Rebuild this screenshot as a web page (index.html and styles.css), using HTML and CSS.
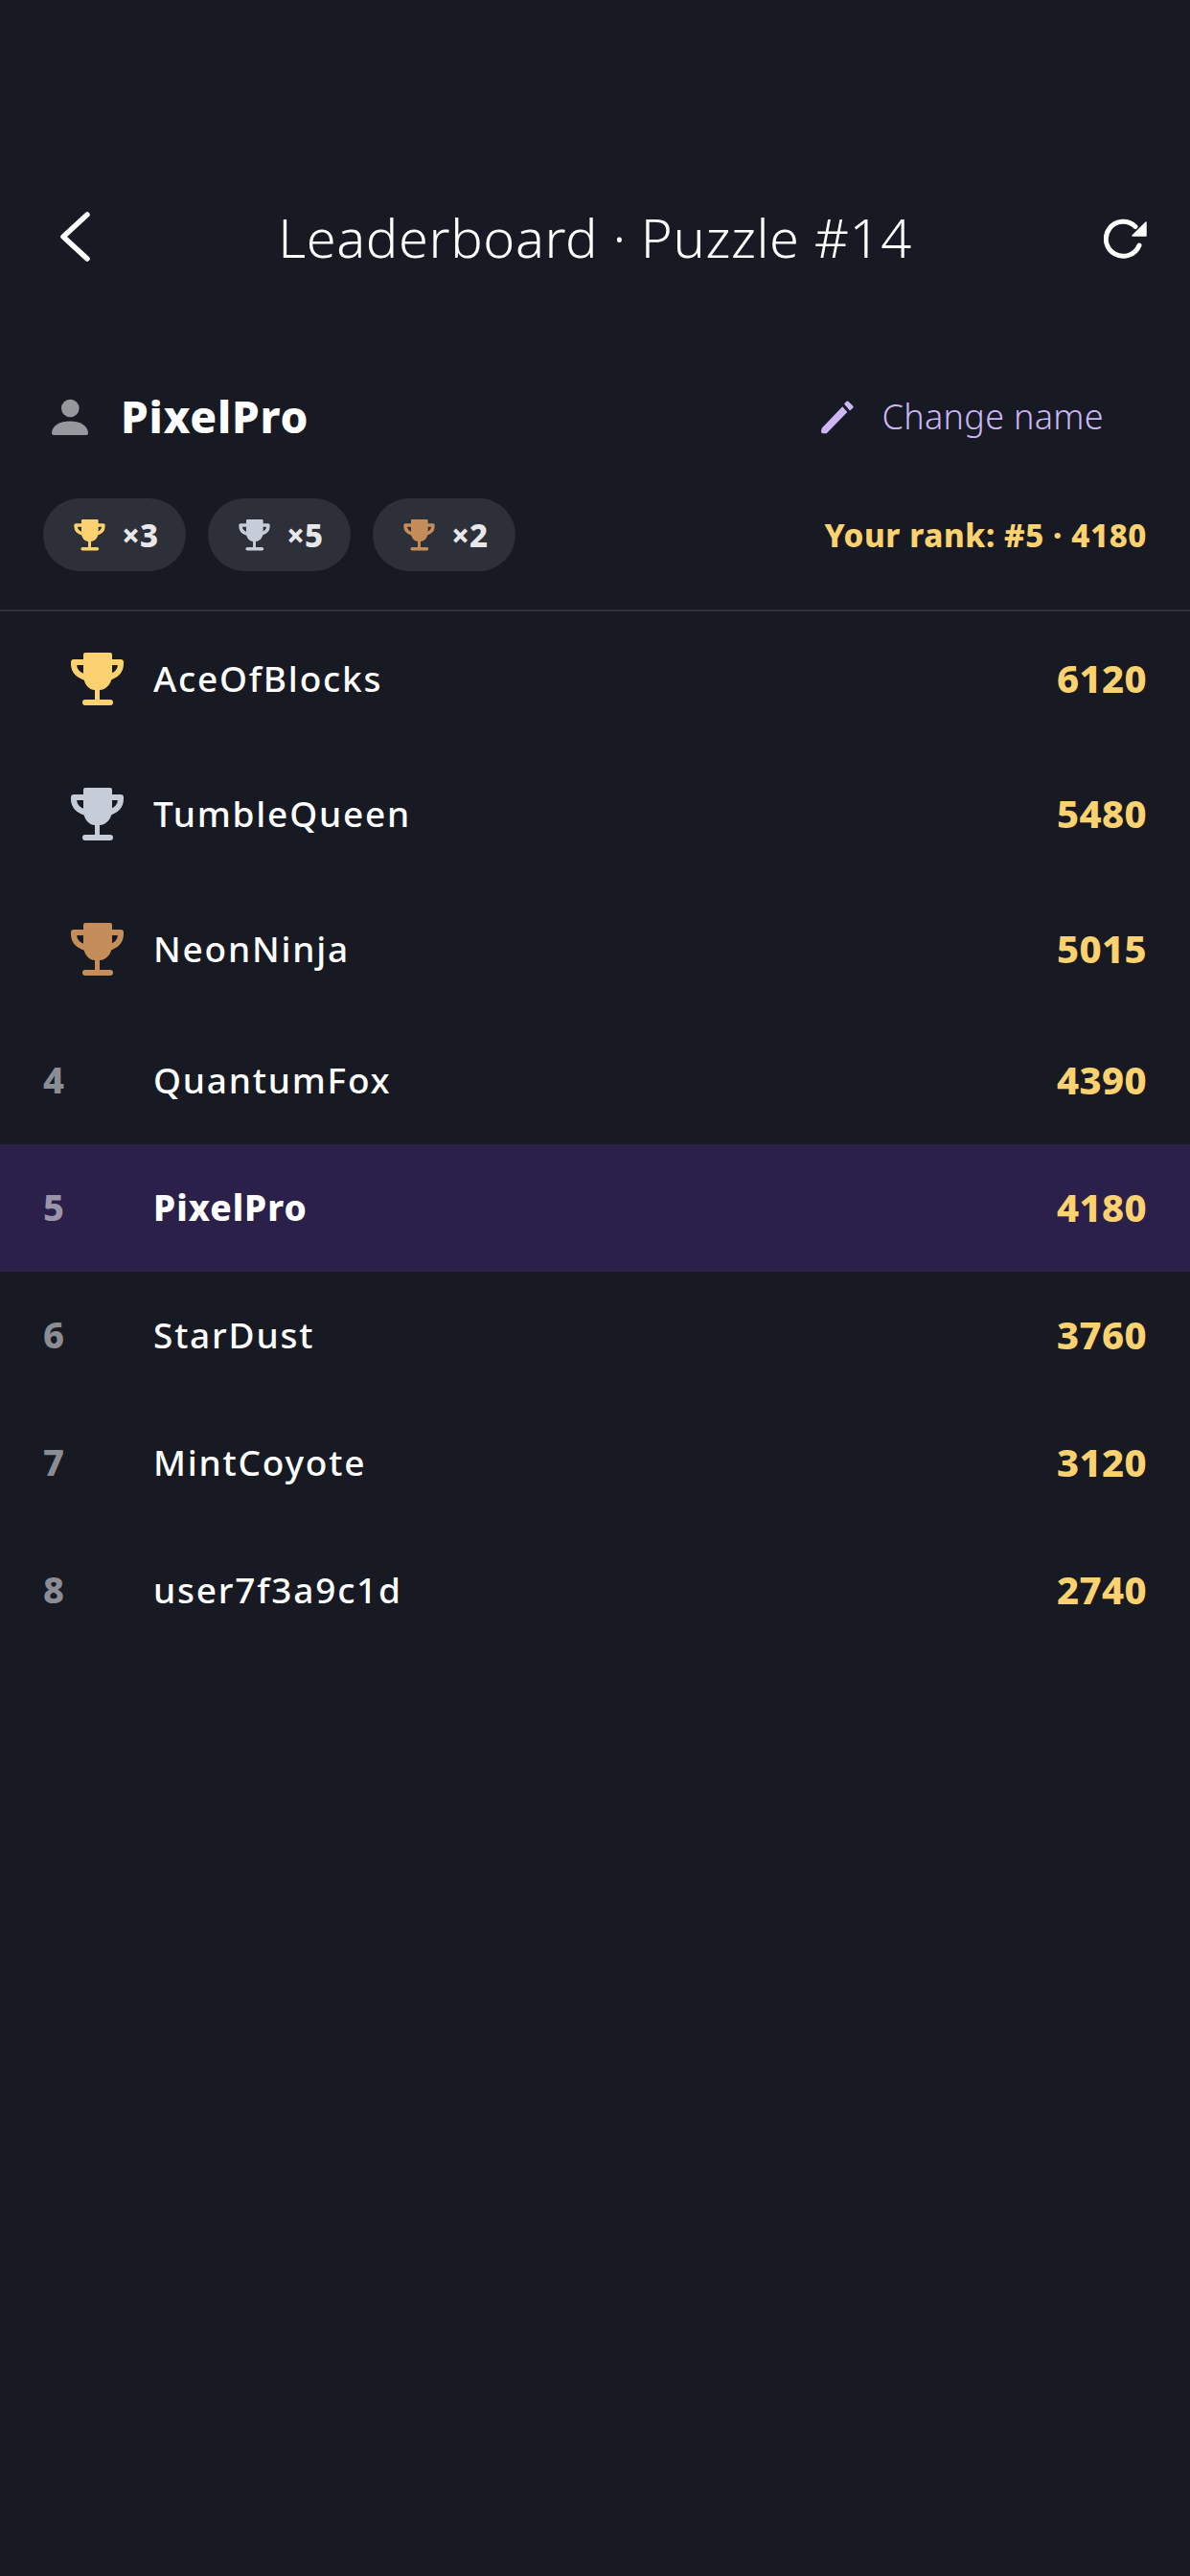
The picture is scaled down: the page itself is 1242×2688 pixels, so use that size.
FILE: index.html
```html
<!DOCTYPE html>
<html lang="en">
<head>
  <meta charset="UTF-8" />
  <meta name="viewport" content="width=device-width, initial-scale=1.0" />
  <title>Leaderboard · Puzzle #14</title>
  <link rel="stylesheet" href="styles.css">
</head>
<body>
  <!-- shared trophy, coloured through currentColor -->
  <svg class="defs" width="0" height="0">
    <symbol id="trophy" viewBox="0 0 55 56">
      <path d="M15 0H41a2 2 0 0 1 2 2V23C43 33 36 39 30 39V49H41a3 3 0 0 1 0 6H15a3 3 0 0 1 0-6H25V39C19 39 13 33 13 23V2a2 2 0 0 1 2-2Z" fill="currentColor"/>
      <path d="M14 10H3V12C3 19 8 24 16 26M41 10H52V12C52 19 47 24 39 26" fill="none" stroke="currentColor" stroke-width="6" stroke-linejoin="round"/>
    </symbol>
  </svg>

  <div class="topbar">
    <svg class="back" viewBox="0 0 31 52"><path d="M28 3L3 26L28 49" fill="none" stroke="#fff" stroke-width="5.5" stroke-linecap="round" stroke-linejoin="round"/></svg>
    <h1>Leaderboard · Puzzle #14</h1>
    <svg class="refresh" viewBox="0 0 46 45"><path d="M33 9.500A18 18 0 1 0 37 29" fill="none" stroke="#fff" stroke-width="5" stroke-linecap="round"/><path d="M44 5V19H30Z" fill="#fff" stroke="#fff" stroke-width="1.500" stroke-linejoin="round"/></svg>
  </div>

  <div class="user-row">
    <div class="user">
      <svg class="person" viewBox="0 0 38 38"><circle cx="19.300" cy="10" r="9.300" fill="#96989d"/><path d="M0 36C0 28 9 23.500 19 23.500S38 28 38 36A2 2 0 0 1 36 38H2A2 2 0 0 1 0 36Z" fill="#96989d"/></svg>
      <span class="user-name">PixelPro</span>
    </div>
    <div class="change">
      <svg class="pencil" viewBox="0 0 34 35"><path d="M0.700 28.700L22.300 6.300L27.300 12L5.700 34.300H2A2 2 0 0 1 0 32.500Z" fill="#cdb6f6"/><path d="M24 3.500L26 1.200A2 2 0 0 1 28.800 1.200L33 5.200A2 2 0 0 1 33 8L30 10.500Z" fill="#cdb6f6"/></svg>
      <span>Change name</span>
    </div>
  </div>

  <div class="stats">
    <div class="pills">
      <div class="pill"><svg class="pill-cup gold"><use href="#trophy"/></svg><span>×3</span></div>
      <div class="pill"><svg class="pill-cup silver"><use href="#trophy"/></svg><span>×5</span></div>
      <div class="pill"><svg class="pill-cup bronze"><use href="#trophy"/></svg><span>×2</span></div>
    </div>
    <div class="my-rank">Your rank: #5 · 4180</div>
  </div>

  <div class="board">
    <div class="row top"><div class="rank"><svg class="cup gold"><use href="#trophy"/></svg></div><div class="name">AceOfBlocks</div><div class="score">6120</div></div>
    <div class="row top"><div class="rank"><svg class="cup silver"><use href="#trophy"/></svg></div><div class="name">TumbleQueen</div><div class="score">5480</div></div>
    <div class="row top"><div class="rank"><svg class="cup bronze"><use href="#trophy"/></svg></div><div class="name">NeonNinja</div><div class="score">5015</div></div>
    <div class="row"><div class="rank">4</div><div class="name">QuantumFox</div><div class="score">4390</div></div>
    <div class="row me"><div class="rank">5</div><div class="name">PixelPro</div><div class="score">4180</div></div>
    <div class="row"><div class="rank">6</div><div class="name">StarDust</div><div class="score">3760</div></div>
    <div class="row"><div class="rank">7</div><div class="name">MintCoyote</div><div class="score">3120</div></div>
    <div class="row"><div class="rank">8</div><div class="name">user7f3a9c1d</div><div class="score">2740</div></div>
  </div>
</body>
</html>
```

FILE: styles.css
```css
html, body {
  margin: 0;
  padding: 0;
  background: #171a23;
}
body {
  width: 1242px;
  min-height: 2688px;
  font-family: "Noto Sans", "Open Sans", sans-serif;
  color: #fff;
  line-height: 1;
}
.defs {
  position: absolute;
}
.gold { color: #fbd26f; }
.silver { color: #c6ccd8; }
.bronze { color: #c48d5a; }

.topbar {
  display: grid;
  grid-template-columns: 1fr auto 1fr;
  align-items: center;
  height: 142px;
  margin-top: 176px;
  padding: 0 45px;
}
.back {
  width: 31px;
  height: 52px;
  margin-left: 18px;
}
.topbar h1 {
  margin: 0;
  font-size: 56px;
  font-weight: 300;
  letter-spacing: 0.6px;
}
.refresh {
  width: 46px;
  height: 45px;
  margin: 5px -1px 0 0;
  justify-self: end;
}

.user-row {
  display: flex;
  justify-content: space-between;
  align-items: center;
  height: 70px;
  margin-top: 82px;
  padding: 0 90px 0 54px;
}
.user, .change {
  display: flex;
  align-items: center;
}
.person {
  width: 38px;
  height: 38px;
  margin-right: 34px;
}
.user-name {
  margin-top: -2px;
  font-size: 46px;
  font-weight: 800;
  letter-spacing: 0.8px;
}
.change {
  font-size: 36px;
  font-weight: 300;
  letter-spacing: 0.3px;
  color: #cdb6f6;
}
.pencil {
  width: 34px;
  height: 35px;
  margin-right: 29px;
}

.stats {
  display: flex;
  justify-content: space-between;
  align-items: center;
  margin-top: 50px;
  padding: 0 45px 40px;
  border-bottom: 2px solid #2f323b;
}
.pills {
  display: flex;
  gap: 23px;
}
.pill {
  display: flex;
  align-items: center;
  justify-content: center;
  gap: 17px;
  width: 149px;
  height: 76px;
  padding-left: 3px;
  box-sizing: border-box;
  border-radius: 38px;
  background: #2d3038;
  font-size: 33px;
  font-weight: 800;
  color: #e8e8ea;
}
.pill-cup {
  width: 33px;
  height: 33px;
}
.my-rank {
  font-size: 33px;
  font-weight: 800;
  letter-spacing: 0.6px;
  color: #fbd26f;
}

.row {
  display: flex;
  align-items: center;
  height: 133px;
  padding: 0 45px;
}
.row.top {
  height: 141px;
}
.row.me {
  background: #2a2049;
}
.rank {
  display: flex;
  width: 115px;
  margin-top: -3px;
  font-size: 38px;
  font-weight: 800;
  color: #8b8d94;
}
.row.top .rank {
  margin-top: 0;
}
.row.me .rank {
  color: #9a95ab;
}
.cup {
  width: 55px;
  height: 56px;
  margin-left: 29px;
}
.name {
  flex: 1;
  margin-top: -2px;
  font-size: 37px;
  font-weight: 500;
  letter-spacing: 1.8px;
}
.row.me .name {
  font-weight: 800;
  letter-spacing: 1px;
}
.score {
  margin-top: -2px;
  font-size: 40px;
  font-weight: 800;
  letter-spacing: 0.4px;
  color: #fbd26f;
}
```
